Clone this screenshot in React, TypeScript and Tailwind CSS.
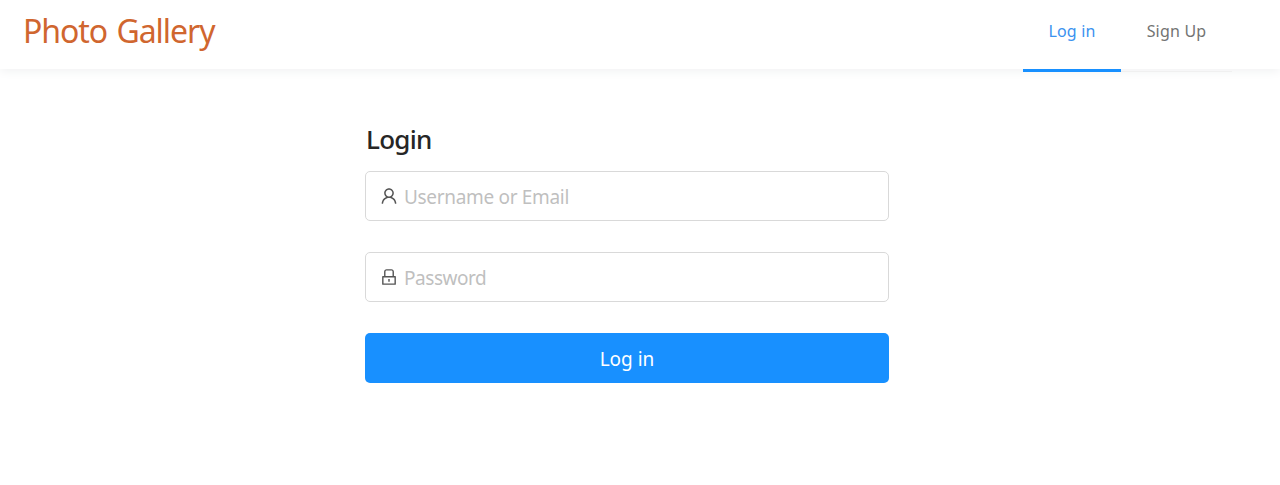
import { AiOutlineUser, AiOutlineLock } from "react-icons/ai";

export default function App() {
  return (
    <div className="h-[485px] bg-white font-['Noto_Sans',sans-serif] text-[#262626]">
      <header className="flex h-[69px] justify-between pl-[23px] pr-12 shadow-[0_2px_10px_#f0f1f2]">
        <h1 className="pt-[8px] text-[32px] leading-[46px] tracking-[-1.05px] [word-spacing:2px] text-[#d0662f]">Photo Gallery</h1>
        <nav className="flex h-[72px] border-b border-[#f0f0f0] text-[16px]">
          <a className="h-[72px] w-[98px] border-b-[3px] border-[#1890ff] pt-[19px] text-center tracking-[0.15px] text-[#3a92ef]">Log in</a>
          <a className="w-[111px] pt-[19px] text-center tracking-[0.2px] text-[#737373]">Sign Up</a>
        </nav>
      </header>
      <main className="ml-[365px] w-[524px] pt-[51px]">
        <h2 className="h-[51px] pl-px text-[26px] font-medium leading-[38px] tracking-[-0.7px]">Login</h2>
        <form className="flex flex-col gap-[31px] text-[19px]">
          <label className="flex h-[50px] items-center gap-[5px] rounded-[5px] border border-[#d9d9d9] px-[13px]">
            <AiOutlineUser className="size-5 shrink-0 text-[#555]" />
            <input className="w-full pt-[3px] tracking-[-0.32px] outline-none placeholder:text-[#bfbfbf]" placeholder="Username or Email" />
          </label>
          <label className="flex h-[50px] items-center gap-[5px] rounded-[5px] border border-[#d9d9d9] px-[13px]">
            <AiOutlineLock className="size-5 shrink-0 text-[#555]" />
            <input type="password" className="w-full pt-[3px] tracking-[-0.45px] outline-none placeholder:text-[#bfbfbf]" placeholder="Password" />
          </label>
          <button type="button" className="h-[50px] rounded-[5px] bg-[#1890ff] pt-[3px] text-white">Log in</button>
        </form>
      </main>
    </div>
  );
}
